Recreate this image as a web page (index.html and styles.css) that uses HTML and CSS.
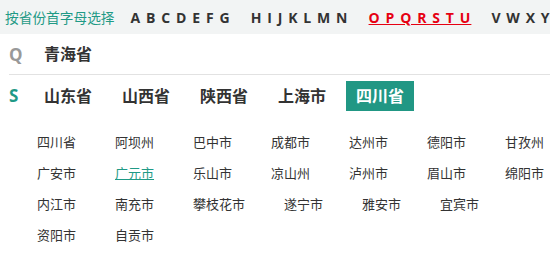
FILE: index.html
```html
<!DOCTYPE html>
<html lang="zh-CN">
<head>
  <meta charset="UTF-8">
  <meta name="viewport" content="width=device-width, initial-scale=1.0">
  <title>按省份选择城市</title>
  <link rel="stylesheet" href="styles.css">
</head>
<body>
  <div class="letter-bar">
    <span class="letter-label">按省份首字母选择</span>
    <a class="letter-group" href="#">A B C D E F G</a>
    <a class="letter-group" href="#">H I J K L M N</a>
    <a class="letter-group active" href="#">O P Q R S T U</a>
    <a class="letter-group" href="#">V W X Y Z</a>
  </div>

  <div class="prov-row">
    <span class="initial initial-gray">Q</span>
    <a class="prov" href="#">青海省</a>
  </div>
  <div class="prov-row no-line">
    <span class="initial initial-teal">S</span>
    <a class="prov" href="#">山东省</a>
    <a class="prov" href="#">山西省</a>
    <a class="prov" href="#">陕西省</a>
    <a class="prov" href="#">上海市</a>
    <a class="prov selected" href="#">四川省</a>
  </div>

  <div class="city-list">
    <a class="city" href="#">四川省</a>
    <a class="city" href="#">阿坝州</a>
    <a class="city" href="#">巴中市</a>
    <a class="city" href="#">成都市</a>
    <a class="city" href="#">达州市</a>
    <a class="city" href="#">德阳市</a>
    <a class="city" href="#">甘孜州</a>
    <a class="city" href="#">广安市</a>
    <a class="city hover" href="#">广元市</a>
    <a class="city" href="#">乐山市</a>
    <a class="city" href="#">凉山州</a>
    <a class="city" href="#">泸州市</a>
    <a class="city" href="#">眉山市</a>
    <a class="city" href="#">绵阳市</a>
    <a class="city" href="#">内江市</a>
    <a class="city" href="#">南充市</a>
    <a class="city" href="#">攀枝花市</a>
    <a class="city" href="#">遂宁市</a>
    <a class="city" href="#">雅安市</a>
    <a class="city" href="#">宜宾市</a>
    <a class="city" href="#">资阳市</a>
    <a class="city" href="#">自贡市</a>
  </div>
</body>
</html>
```

FILE: styles.css
```css
html {
  overflow: hidden;
}
body {
  margin: 0;
  width: 620px;
  font-family: 'Open Sans', 'Noto Sans CJK SC', sans-serif;
  background: white;
  color: #333;
}
a {
  text-decoration: none;
  color: #333;
}
.letter-bar {
  height: 34px;
  background: #f2f4f4;
  display: flex;
  align-items: center;
  padding-left: 5px;
  white-space: nowrap;
}
.letter-label {
  font-size: 13.7px;
  color: #1f9a86;
  margin-right: 16px;
}
.letter-group {
  font-size: 14px;
  font-weight: bold;
  letter-spacing: 1.1px;
  margin-right: 20px;
}
.letter-group.active {
  color: #e60012;
  text-decoration: underline;
}
.prov-row {
  display: flex;
  align-items: center;
  gap: 10px;
  height: 40px;
  margin-left: 9px;
  border-bottom: 1px solid #e2e2e2;
}
.prov-row.no-line {
  border-bottom: none;
  height: 41px;
}
.initial {
  width: 15px;
  font-size: 17px;
  font-weight: bold;
}
.initial-gray { color: #999; }
.initial-teal { color: #1f9a86; }
.prov {
  font-size: 16px;
  font-weight: bold;
  padding: 0 10px;
  line-height: 30px;
}
.prov.selected {
  background: #219784;
  color: white;
}
.city-list {
  width: 512px;
  padding: 11px 0 0 37px;
  display: flex;
  flex-wrap: wrap;
  column-gap: 39px;
}
.city {
  font-size: 13px;
  line-height: 31px;
}
.city.hover {
  color: #1f9a86;
  text-decoration: underline;
}
```
